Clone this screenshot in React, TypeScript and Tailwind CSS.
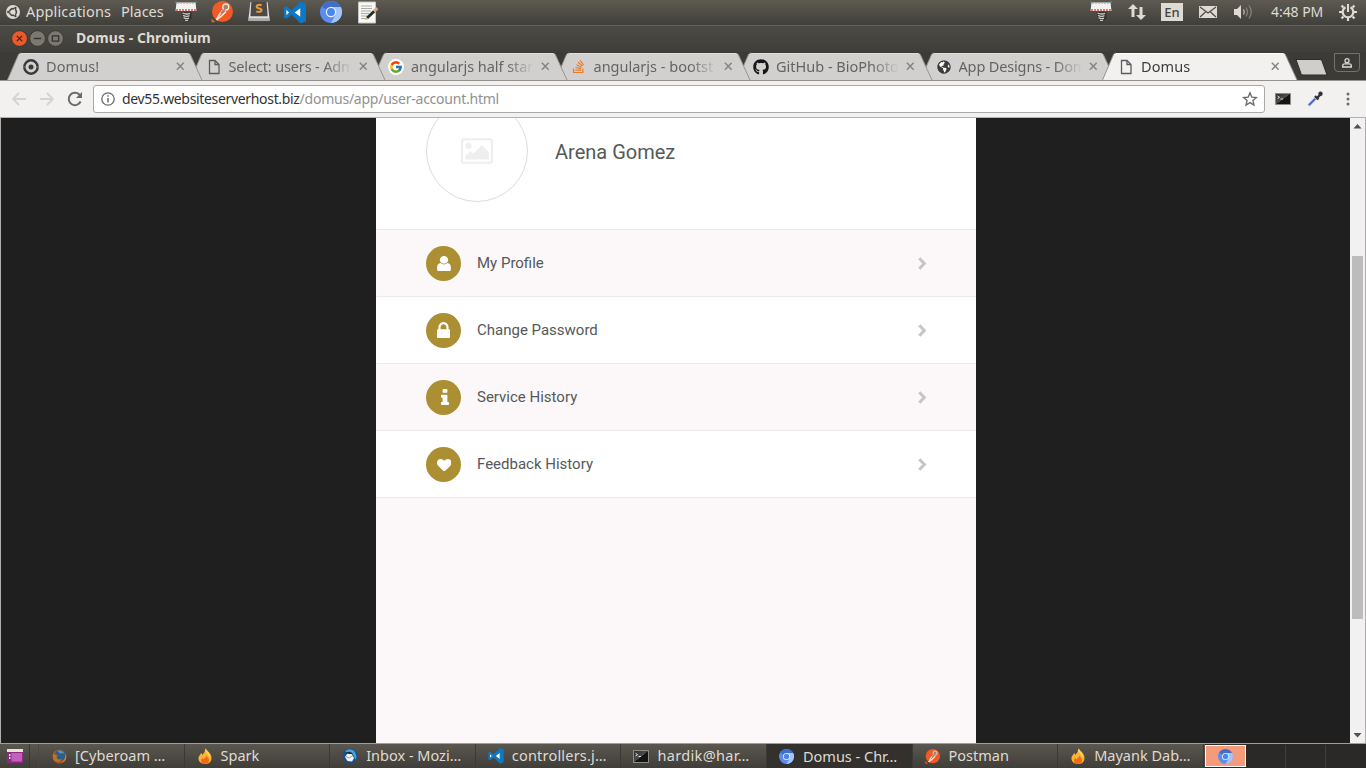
import type { ReactNode } from "react";
import { FaGithub, FaStackOverflow, FaGlobeAmericas } from "react-icons/fa";
import { FcGoogle } from "react-icons/fc";

const ui = "font-['Noto_Sans','Open_Sans',sans-serif]";

function Chromium({ className }: { className: string }) {
  return (
    <svg viewBox="0 0 24 24" className={className}>
      <circle cx="12" cy="12" r="12" fill="#5b8def" />
      <path d="M12 12 1.600 6A12 12 0 0 1 22.400 6.500H12Z" fill="#3f6fc9" />
      <path d="M12 6.500h10.700A12 12 0 0 1 12 24l5-9Z" fill="#a5c5fa" />
      <circle cx="12" cy="12" r="5.700" fill="#e6effd" />
      <circle cx="12" cy="12" r="4.300" fill="#4a86ec" />
    </svg>
  );
}

function Screw() {
  return (
    <svg viewBox="0 0 22 22" className="h-[22px] w-[22px]">
      <path d="M1.500 1.500h19l1 8.500H.5z" fill="#f4f2ef" />
      <path d="M2 2.500h18" stroke="#c9c4be" strokeDasharray="2 1" />
      <path d="M1 9h20" stroke="#d9534a" strokeWidth="1.500" strokeDasharray="2 1" />
      <path d="M0 1h2M20 1h2" stroke="#4a90d9" />
      <path d="M6.500 11h10v6.500L12 21.500l-4-3Z" fill="#35332f" />
      <path d="M7.500 12q4 1.800 7.500.3M8 14.300q3.500 1.800 6.500.4M8.500 16.600q3 1.600 5.500.5M10 19q2 1 3 .3" fill="none" stroke="#d2cfca" strokeWidth="1.300" />
    </svg>
  );
}

function Postman({ className }: { className: string }) {
  return (
    <svg viewBox="0 0 22 22" className={className}>
      <circle cx="11.500" cy="10.500" r="10.500" fill="#f15a24" />
      <path d="M.5 21.500v-4l4 3.500Z" fill="#f15a24" />
      <circle cx="14.800" cy="6" r="3" fill="#a9806b" stroke="#f9e7dc" strokeWidth="1.300" />
      <path d="m12 9-3.500 4.500L5.500 19" fill="none" stroke="#f5d3bf" strokeWidth="2" />
      <path d="m15 10.500-4.500 4.500-5 4" fill="none" stroke="#f9e7dc" strokeWidth="1.600" />
      <path d="m10 12 4.500-4.500" stroke="#8f8378" strokeWidth="1.500" />
    </svg>
  );
}

function Code({ className }: { className: string }) {
  return (
    <svg viewBox="0 0 24 24" className={className}>
      <path fillRule="evenodd" d="M18 .5 8.500 9.700 3 5.500.5 6.800v10.400L3 18.500l5.500-4.200L18 23.500l5.500-2.300V2.800ZM3 9.200 5.800 12 3 14.800ZM17.500 7.500v9L11.700 12Z" fill="#0b78c8" />
      <path d="M3 9.200 5.800 12 3 14.800ZM17.500 7.500v9L11.700 12Z" fill="#fff" />
    </svg>
  );
}

function Sublime() {
  return (
    <svg viewBox="0 0 24 22" className="h-[21px] w-6">
      <path d="M3 1h18l2 17v3H1v-3Z" fill="#dedede" />
      <path d="M4 1h16l1 15H3Z" fill="#4b4a48" />
      <path d="M1 18h22v3H1z" fill="#aaa" />
      <path d="M14.800 4.500c-4-1.500-6.300.8-4.800 2.500l4 1.500c2 1.600-.6 4-4.800 2.300" fill="none" stroke="#f49a2c" strokeWidth="2" />
    </svg>
  );
}

function Notepad() {
  return (
    <svg viewBox="0 0 22 23" className="h-[23px] w-[22px]">
      <path d="M1.500 1h17v21h-17z" fill="#f8f8f6" stroke="#c6c5c1" />
      <path d="M4 5h11M4 7.500h11M4 10h10M4 12.500h8M4 15h6M4 17.500h5" stroke="#aaa9a5" />
      <path d="m10 17 8-7.500" stroke="#292927" strokeWidth="3" />
      <path d="m17 10.500 2-2" stroke="#c9bb44" strokeWidth="3" />
      <path d="m18.700 8.700 1.600-1.500" stroke="#e695b5" strokeWidth="3.200" />
      <path d="m8 19 1-3 2.300 2.200Z" fill="#d9b67c" />
    </svg>
  );
}

function Ubuntu() {
  return (
    <svg viewBox="0 0 14 14" className="h-[14px] w-[14px]">
      <circle cx="7" cy="7" r="7" fill="#dfdbd2" />
      <circle cx="7" cy="7" r="3.400" fill="none" stroke="#4a4843" strokeWidth="1.600" />
      <path d="m7 7-6 0M7 7l3.200-5.500M7 7l3.200 5.500" stroke="#dfdbd2" strokeWidth="1" />
      <circle cx="2.300" cy="7" r="1.200" fill="#4a4843" />
      <circle cx="9.400" cy="2.900" r="1.200" fill="#4a4843" />
      <circle cx="9.400" cy="11.100" r="1.200" fill="#4a4843" />
      <circle cx="7" cy="7" r="2" fill="#dfdbd2" />
    </svg>
  );
}

function Page() {
  return (
    <svg viewBox="0 0 12 16" className="h-4 w-3">
      <path d="M1.500 1.500h5.500l4 4v9H1.500Z" fill="none" stroke="#5c5c5c" strokeWidth="1.300" />
      <path d="M7 1.500v4h4" fill="none" stroke="#5c5c5c" strokeWidth="1.300" />
    </svg>
  );
}

function Flame() {
  return (
    <svg viewBox="0 0 16 16" className="h-4 w-4">
      <path d="M8.500 0c1 3 6.500 5 6 10.500C14 14.500 11.500 16 8 16s-6.500-2-6.500-5.500C1.500 7.500 3.500 7 4 5c1 .5 1.200 1 1.200 2C7 5 8.500 3 8.500 0Z" fill="#f9b233" />
      <path d="M9.500 7c0 2 3 3 2.500 6-.4 2-2 3-4 3s-4-1-4-3.500C4 11 5 10.500 5.200 10c.6.3.8.8.8 1.400C8 10.500 9.500 9 9.500 7Z" fill="#ee6b12" />
      <path d="M8.500 1.500c1 3 3.500 4 4 7" fill="none" stroke="#fddc72" strokeWidth="1.300" />
    </svg>
  );
}

function Firefox() {
  return (
    <svg viewBox="0 0 16 16" className="h-[15px] w-[15px] opacity-80">
      <circle cx="8" cy="8" r="7.500" fill="#c75b1c" />
      <circle cx="8.800" cy="6.800" r="5.800" fill="#26649a" />
      <path d="M6 2c3-1 6 0 7 3-2-1-3-1-4 0Z" fill="#63a9cb" />
      <path d="M1 5c1 1 2 1 3 1l2 1-1 1.500c0 3 4 3.500 6 2-2 4-8 4-10 0Z" fill="#de7c27" />
      <path d="M14.500 5c1.500 4 0 8-4 9.500 3-3 4-5 4-9.500Z" fill="#edb33a" />
    </svg>
  );
}

function Thunderbird() {
  return (
    <svg viewBox="0 0 16 16" className="h-4 w-4">
      <circle cx="8" cy="8" r="7.500" fill="#17508f" />
      <path d="M3 3.500c3-3 7-3 10 .5l1.500 5-1 3-2-5-4-2Z" fill="#4ba3dd" />
      <path d="m3 9 2.500-3.500 4 .5 2.500 4-2 3.500-4.500-.5Z" fill="#f5f5f1" />
      <path d="m4 8.500 3 1.500 3.500-2" fill="none" stroke="#8c8881" strokeWidth=".8" />
      <path d="M4 5c2-2 5-1.500 7 1L7.500 6Z" fill="#162f51" />
    </svg>
  );
}

function Terminal({ className }: { className: string }) {
  return (
    <svg viewBox="0 0 16 12" className={className} preserveAspectRatio="none">
      <defs>
        <linearGradient id="term" x1="0" y1="0" x2="1" y2="1">
          <stop offset="0" stopColor="#2a2a2a" />
          <stop offset=".5" stopColor="#4e4e4e" />
          <stop offset=".52" stopColor="#141414" />
        </linearGradient>
      </defs>
      <path d="M.5.500h15v11H.5z" fill="url(#term)" stroke="#8b8a87" />
      <path d="m2.500 3 2 1.300-2 1.300M5.500 6h2.500" fill="none" stroke="#f0f0f0" strokeWidth=".9" />
    </svg>
  );
}

function DomusMark() {
  return (
    <svg viewBox="0 0 16 16" className="h-4 w-4">
      <circle cx="8" cy="8" r="6.700" fill="none" stroke="#39393c" strokeWidth="2.500" />
      <circle cx="8" cy="8" r="2.500" fill="#39393c" />
      <path d="M0 8h2.700M13.300 8H16" stroke="#807f80" strokeWidth="1" />
    </svg>
  );
}

const tabs: { title: string; icon: ReactNode; track: string }[] = [
  { title: "Domus!", icon: <DomusMark />, track: "tracking-[0.1px]" },
  { title: "Select: users - Adm", icon: <Page />, track: "tracking-[-0.15px]" },
  {
    title: "angularjs half star",
    icon: (
      <span className="flex h-4 w-4 items-center justify-center rounded-full bg-white">
        <FcGoogle className="h-[14px] w-[14px]" />
      </span>
    ),
    track: "tracking-[-0.05px]",
  },
  { title: "angularjs - bootst", icon: <FaStackOverflow className="h-[15px] w-[15px] text-[#e87a2a]" />, track: "tracking-[0px]" },
  { title: "GitHub - BioPhoto", icon: <FaGithub className="h-4 w-4 text-[#161616]" />, track: "tracking-[0px]" },
  {
    title: "App Designs - Dom",
    icon: (
      <span className="flex h-[14px] w-[14px] items-center justify-center rounded-full bg-white">
        <FaGlobeAmericas className="h-[14px] w-[14px] text-[#3b3b3b]" />
      </span>
    ),
    track: "tracking-[-0.15px]",
  },
  { title: "Domus", icon: <Page />, track: "tracking-[0.1px]" },
];

const stack = ["z-[7]", "z-[6]", "z-[5]", "z-[4]", "z-[3]", "z-[2]", "z-[8]"];

function Tab({ i }: { i: number }) {
  const t = tabs[i];
  const active = i === 6;
  return (
    <div className={`relative h-7 w-[182.500px] shrink-0 ${stack[i]}`}>
      <svg viewBox="0 0 196 28" className="absolute left-0 top-0 h-7 w-[196px]">
        <path d="M.5 28 11.500 2.500Q12.500 1 14 1H181Q182.500 1 183.300 2.500L195 28Z" fill={active ? "#f2f1f0" : "#d2d0ce"} />
        <path d="M.5 28 11.500 2.500Q12.500 1 14 1" fill="none" stroke="#96938f" />
        <path d="M183.300 2.500 195 28" fill="none" stroke="#96938f" />
        <path d="M14 1.500H181" stroke={active ? "#fff" : "#e0dedc"} />
      </svg>
      <div className="relative flex h-7 items-center pl-4">
        <span className="mt-px flex w-4 justify-center">{t.icon}</span>
        <span
          className={`-mt-px ml-[7px] w-[123px] overflow-hidden whitespace-nowrap text-[14.500px] leading-5 ${t.track} ${active ? "text-[#3c3c3c]" : "text-[#656462]"} [mask-image:linear-gradient(to_right,#000_78%,transparent)]`}
        >
          {t.title}
        </span>
        <svg viewBox="0 0 10 10" className="ml-[7px] mt-px h-[8.500px] w-[8.500px]">
          <path d="m1 1 8 8M9 1 1 9" stroke="#858381" strokeWidth="1.700" />
        </svg>
      </div>
    </div>
  );
}

const rows = [
  {
    label: "My Profile",
    box: "256 128 1280 1536",
    size: "h-[15.500px] w-[14px]",
    d: "M1536 1399q0 109-62.500 187t-150.500 78h-854q-88 0-150.500-78t-62.500-187q0-85 8.500-160.500t31.500-152 58.500-131 94-89 134.500-34.500q131 128 313 128t313-128q76 0 134.500 34.500t94 89 58.500 131 31.500 152 8.500 160.500zm-256-887q0 159-112.500 271.500t-271.500 112.500-271.500-112.500-112.500-271.500 112.500-271.500 271.500-112.500 271.500 112.500 112.500 271.500z",
  },
  {
    label: "Change Password",
    box: "320 128 1152 1408",
    size: "h-[16px] w-[13px] -mt-px",
    d: "M640 768h512v-192q0-106-75-181t-181-75-181 75-75 181v192zm832 96v576q0 40-28 68t-68 28h-960q-40 0-68-28t-28-68v-576q0-40 28-68t68-28h32v-192q0-184 132-316t316-132 316 132 132 316v192h32q40 0 68 28t28 68z",
  },
  {
    label: "Service History",
    box: "576 128 640 1408",
    size: "h-[16px] w-[8px] ml-[2px] -mt-px",
    d: "M1216 1344v128q0 26-19 45t-45 19h-512q-26 0-45-19t-19-45v-128q0-26 19-45t45-19h64v-384h-64q-26 0-45-19t-19-45v-128q0-26 19-45t45-19h384q26 0 45 19t19 45v576h64q26 0 45 19t19 45zm-128-1152v192q0 26-19 45t-45 19h-256q-26 0-45-19t-19-45v-192q0-26 19-45t45-19h256q26 0 45 19t19 45z",
  },
  {
    label: "Feedback History",
    box: "0 128 1792 1536",
    size: "h-[12.500px] w-[14.500px] ml-px mt-px",
    d: "M896 1664q-26 0-44-18l-624-602q-10-8-27.500-26t-55.500-65.500-68-97.500-53.500-121-23.500-138q0-220 127-344t351-124q62 0 126.500 21.500t120 58 95.500 68.500 76 68q36-36 76-68t95.500-68.500 120-58 126.500-21.500q224 0 351 124t127 344q0 221-229 450l-623 600q-18 18-44 18z",
  },
];

const tasks: { label: string; icon: ReactNode; track: string; active?: boolean }[] = [
  { label: "[Cyberoam …", icon: <Firefox />, track: "tracking-[0.05px]" },
  { label: "Spark", icon: <Flame />, track: "" },
  { label: "Inbox - Mozi…", icon: <Thunderbird />, track: "" },
  { label: "controllers.j…", icon: <Code className="h-4 w-4" />, track: "tracking-[0.2px]" },
  { label: "hardik@har…", icon: <Terminal className="h-[13px] w-4" />, track: "tracking-[0.35px]" },
  { label: "Domus - Chr…", icon: <Chromium className="h-[15px] w-[15px]" />, track: "", active: true },
  { label: "Postman", icon: <Postman className="h-[15px] w-[15px]" />, track: "" },
  { label: "Mayank Dab…", icon: <Flame />, track: "" },
];

function MenuBar() {
  return (
    <header className="flex h-[25px] items-center bg-linear-to-b from-[#5d5a52] to-[#403f3a] pb-[2px] pl-[6px] text-[14.500px] leading-[23px] text-[#dfdbd2]">
      <span className="mt-px"><Ubuntu /></span>
      <span className="ml-[6px] w-[95px] whitespace-nowrap tracking-[0.15px]">Applications</span>
      <span className="w-[55px] whitespace-nowrap">Places</span>
      <span className="-ml-px flex w-9 justify-start"><Screw /></span>
      <span className="flex w-9 pt-px"><Postman className="h-[22px] w-[22px]" /></span>
      <span className="flex w-9"><Sublime /></span>
      <span className="flex w-9 pt-px"><Code className="h-[23px] w-6" /></span>
      <span className="ml-[1px] flex w-[37px] pt-px"><Chromium className="h-[22px] w-[22px]" /></span>
      <span className="pt-px"><Notepad /></span>
      <div className="ml-auto flex items-center">
        <Screw />
        <svg viewBox="0 0 18 18" className="ml-4 h-[18px] w-[18px]">
          <path d="M5 1 0 6h3.500v8h3V6H10ZM13 17l5-5h-3.500V4h-3v8H8Z" fill="#dfdbd2" />
        </svg>
        <span className="ml-[15px] mt-px flex h-[18px] w-[22px] items-center justify-center bg-[#dfdbd2] pt-px text-[13px] font-medium text-[#45433e]">En</span>
        <svg viewBox="0 0 18 12" className="ml-4 mt-px h-3 w-[18px]">
          <path d="M0 0h18v12H0z" fill="#dfdbd2" />
          <path d="m1 1 8 6 8-6M1 11l5.500-5M17 11l-5.500-5" fill="none" stroke="#4c4a44" strokeWidth="1.200" />
        </svg>
        <svg viewBox="0 0 20 16" className="ml-4 mt-px h-4 w-5">
          <path d="M1 5h3l4-4v14l-4-4H1Z" fill="#dfdbd2" />
          <path d="M10.500 5.500q1.500 2.500 0 5" fill="none" stroke="#bdb9b0" strokeWidth="1.400" />
          <path d="M13 3.500q3 4.500 0 9M16 1.500q4.500 6.500 0 13" fill="none" stroke="#87837b" strokeWidth="1.300" />
        </svg>
        <span className="ml-[18px] w-[68px] whitespace-nowrap text-[14px] tracking-[-0.05px]">4:48 PM</span>
        <svg viewBox="0 0 18 18" className="mr-[9px] h-[18px] w-[18px]">
          <g stroke="#dfdbd2" fill="none">
            <path d="M6.500 4.300a5.300 5.300 0 1 0 5 0" strokeWidth="2.200" />
            <path d="M9 1v8" strokeWidth="2" />
            <path d="M9 15v3M3 9H0M18 9h-3M4.500 13.500l-2 2M13.500 13.500l2 2M4.500 4.500l-2-2M13.500 4.500l2-2" strokeWidth="2.200" />
          </g>
        </svg>
      </div>
    </header>
  );
}

function TitleBar() {
  return (
    <div className="flex h-[27px] items-center border-t border-[#66635d] bg-linear-to-b from-[#4c4a44] to-[#403e3a] pb-px pl-[11px]">
      {[0, 1, 2].map((n) => (
        <svg key={n} viewBox="0 0 16 16" className="mr-px h-[17px] w-[17px]">
          <circle cx="8" cy="8" r="7.400" fill={n === 0 ? "#ec5a2c" : "#7b786f"} stroke="#33312d" strokeWidth=".8" />
          {n === 0 && <path d="m5.500 5.500 5 5m0-5-5 5" stroke="#44261b" strokeWidth="1.200" />}
          {n === 1 && <path d="M4.500 8H11.500" stroke="#33312d" strokeWidth="1.300" />}
          {n === 2 && <path d="M5 5.500h6v5H5z" fill="none" stroke="#33312d" strokeWidth="1.200" />}
        </svg>
      ))}
      <span className="-mt-px ml-[11px] text-[14px] font-bold leading-5 tracking-[0.05px] text-[#dfdbd2]">Domus - Chromium</span>
    </div>
  );
}

function Toolbar() {
  return (
    <div className="flex h-[37px] shrink-0 items-center border-b border-[#b3b1ae] bg-[#f2f1f0] pl-[11px]">
      <svg viewBox="0 0 16 14" className="h-[14px] w-4"><path d="M15 7H2m6-6L2 7l6 6" fill="none" stroke="#d4d3d2" strokeWidth="1.800" /></svg>
      <svg viewBox="0 0 16 14" className="ml-3 h-[14px] w-4"><path d="M1 7h13M8 1l6 6-6 6" fill="none" stroke="#d4d3d2" strokeWidth="1.800" /></svg>
      <svg viewBox="0 0 16 16" className="ml-3 h-4 w-4">
        <path d="M13.600 10.500A6.200 6.200 0 1 1 12.300 3.500L14 5.200" fill="none" stroke="#6b6a69" strokeWidth="2" />
        <path d="M15 1v6H9Z" fill="#6b6a69" />
      </svg>
      <div className="ml-[10px] flex h-7 w-[1172px] items-center rounded-[3px] border border-[#aba9a7] bg-white pl-[7px]">
        <svg viewBox="0 0 14 14" className="h-[14px] w-[14px]">
          <circle cx="7" cy="7" r="6.200" fill="none" stroke="#6c6b6a" strokeWidth="1.300" />
          <path d="M7 6v4.500M7 3.300v1.500" stroke="#6c6b6a" strokeWidth="1.500" />
        </svg>
        <span className="ml-[7px] whitespace-nowrap text-[14px] leading-5 tracking-[-0.33px] text-[#333]">
          dev55.websiteserverhost.biz<span className="tracking-[-0.24px] text-[#919191]">/domus/app/user-account.html</span>
        </span>
        <svg viewBox="0 0 16 16" className="ml-auto mr-[6px] h-4 w-4">
          <path d="m8 1.800 1.800 4.300 4.600.4-3.500 3 1.100 4.600L8 11.600l-4 2.500 1.100-4.600-3.500-3 4.600-.4Z" fill="none" stroke="#6b6a69" strokeWidth="1.300" />
        </svg>
      </div>
      <Terminal className="ml-[10px] h-3 w-4" />
      <svg viewBox="0 0 16 16" className="ml-4 h-4 w-4">
        <path d="m1.500 14.500 8-8" stroke="#a9b3cf" strokeWidth="3" />
        <path d="m2 14 6-6" stroke="#365fd4" strokeWidth="1.600" />
        <path d="m8 5 3.500 3.500M10 7l3.500-3.500" stroke="#303237" strokeWidth="2.400" />
        <circle cx="13.500" cy="2.800" r="2.200" fill="#303237" />
      </svg>
      <svg viewBox="0 0 4 14" className="ml-[22.500px] h-[14px] w-1">
        <circle cx="2" cy="2" r="1.500" fill="#6b6a69" /><circle cx="2" cy="7" r="1.500" fill="#6b6a69" /><circle cx="2" cy="12" r="1.500" fill="#6b6a69" />
      </svg>
    </div>
  );
}

function Account() {
  return (
    <main className="ml-[375px] h-[625px] w-[600px] shrink-0 overflow-hidden bg-[#fcf8f9] font-[Roboto,sans-serif] text-[#55595a]">
      <section className="flex h-[112px] items-end border-b border-[#ebebeb] bg-white pb-[27px] pl-[50px]">
        <div className="flex h-[102px] w-[102px] shrink-0 items-center justify-center rounded-full border border-[#dcdcdc]">
          <svg viewBox="-64 128 1920 1536" className="h-[26px] w-8">
            <path fill="#eee" d="M576 576q0 80-56 136t-136 56-136-56-56-136 56-136 136-56 136 56 56 136zm1024 384v448h-1408v-192l320-320 160 160 512-512zm96-704h-1600q-13 0-22.500 9.500t-9.500 22.500v1216q0 13 9.500 22.500t22.500 9.500h1600q13 0 22.500-9.500t9.500-22.500v-1216q0-13-9.500-22.500t-22.500-9.500zm160 32v1216q0 66-47 113t-113 47h-1600q-66 0-113-47t-47-113v-1216q0-66 47-113t113-47h1600q66 0 113 47t47 113z" />
          </svg>
        </div>
        <h1 className="mb-[36px] ml-[27px] text-[20px] leading-7">Arena Gomez</h1>
      </section>
      {rows.map((r, i) => (
        <div key={r.label} className={`flex h-[67px] items-center border-b border-[#ebebeb] pl-[50px] pr-[49px] ${i % 2 ? "bg-white" : "bg-[#fcf8f9]"}`}>
          <span className="flex h-[35px] w-[35px] items-center justify-center rounded-full bg-[#ac8e33] pt-px">
            <svg viewBox={r.box} preserveAspectRatio="none" className={r.size}><path d={r.d} fill="#fff" /></svg>
          </span>
          <span className="ml-4 text-[15px] leading-5">{r.label}</span>
          <svg viewBox="0 0 9 13" className="ml-auto h-[13px] w-[9px]"><path d="m1.300 1.300 5 5.200-5 5.200" fill="none" stroke="#c6c5c5" strokeWidth="3" /></svg>
        </div>
      ))}
    </main>
  );
}

export default function App() {
  return (
    <div className={`flex h-[768px] w-[1366px] flex-col overflow-hidden bg-[#403e3a] ${ui}`}>
      <MenuBar />
      <TitleBar />
      <div className="flex h-[29px] shrink-0 items-start border-b border-[#96938f] bg-[#3d3b37] pl-[7px]">
        {tabs.map((t, i) => <Tab key={t.title} i={i} />)}
        <svg viewBox="0 0 34 18" className="ml-[9.500px] mt-[7px] h-[18px] w-[34px]">
          <path d="M2 .5h24q1.500 0 2 1.500l5 14H9q-1.500 0-2-1.500Z" fill="#d0cecc" stroke="#2f2d2a" />
        </svg>
        <span className="ml-[6px] mt-px flex h-[19px] w-[26px] items-center justify-center rounded-b-[4px] border border-[#77736b] bg-[#3d3b37]">
          <svg viewBox="0 0 10 10" className="h-[10px] w-[10px]">
            <circle cx="5" cy="2.700" r="2" fill="none" stroke="#dedbd4" strokeWidth="1.300" />
            <path d="M.7 9V7.800q0-2 2-2h4.600q2 0 2 2V9Z" fill="none" stroke="#dedbd4" strokeWidth="1.300" />
          </svg>
        </span>
      </div>
      <Toolbar />
      <div className="flex h-[625px] shrink-0 border-l border-r border-[#b0aeab] bg-[#1f1f1f]">
        <Account />
        <div className="ml-auto flex h-full w-[15px] flex-col items-center bg-[#f1f1f1]">
          <svg viewBox="0 0 15 138" className="h-[138px] w-[15px]"><path d="M3.500 10.500 7.500 6l4 4.500Z" fill="#505050" /></svg>
          <div className="h-[363px] w-[11px] bg-[#bcbcbc]" />
          <svg viewBox="0 0 15 15" className="mt-auto h-[15px] w-[15px]"><path d="M3.500 5 7.500 9.500l4-4.500Z" fill="#505050" /></svg>
        </div>
      </div>
      <footer className="flex h-[25px] shrink-0 border-t border-[#a19e98] bg-linear-to-b from-[#5a574f] to-[#403e39] text-[14.500px] text-[#dfdbd2]">
        <div className="flex w-[30px] items-center justify-center border-r border-[#3b3935]">
          <svg viewBox="0 0 16 14" className="h-[14px] w-4">
            <path d="M0 1h16v13H0z" fill="#8a2a83" />
            <path d="M0 0h16v3H0z" fill="#e8e5d8" />
            <path d="M4.500 4h10.500v8.500H4.500z" fill="#c55fbd" />
            <path d="M2 5h1.500v2H2zM2 8h1.500v2H2z" fill="#f0e6ef" />
          </svg>
        </div>
        <div className="w-[9px] border-r border-[#4a4842]" />
        {tasks.map((t) => (
          <div key={t.label} className={`flex w-[145.600px] shrink-0 items-center border-r border-[#3b3935] pl-3 ${t.active ? "bg-[#33312e] pt-px" : ""}`}>
            <span className="flex w-4 justify-center">{t.icon}</span>
            <span className={`-mt-[2px] ml-2 whitespace-nowrap leading-5 ${t.track}`}>{t.label}</span>
          </div>
        ))}
        <div className="ml-auto flex w-[161px] bg-[#2a2927] pt-px">
          <div className="flex h-[22px] w-[41px] items-center justify-center border border-white bg-[#f39b7b]">
            <Chromium className="h-[15px] w-[15px]" />
          </div>
          <div className="h-full w-10 border-r border-[#403e3a]" />
          <div className="h-full w-10 border-r border-[#403e3a]" />
          <div className="h-full w-10" />
        </div>
      </footer>
    </div>
  );
}
